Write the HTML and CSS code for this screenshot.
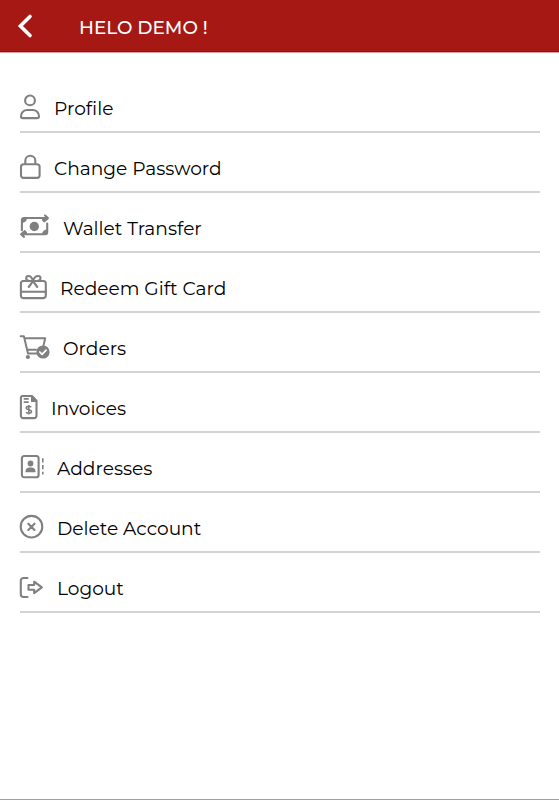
FILE: index.html
```
<!DOCTYPE html>
<html lang="en">
<head>
<meta charset="utf-8">
<title>Account</title>
<link rel="stylesheet" href="styles.css">
</head>
<body>
<header class="bar">
  <svg class="back" width="20" height="28" viewBox="0 0 20 28"><path d="M14 4.500 4.400 14 14 23.500"/></svg>
  <h1 class="title">HELO DEMO !</h1>
</header>
<main class="menu">
  <a class="row profile"><svg class="icon" width="36" height="28" viewBox="0 0 36 28"><circle cx="12" cy="7.4" r="4.9"/><path d="M3 23.2c0-3.6 2.8-6.2 6.2-6.2h5.6c3.4 0 6.2 2.6 6.2 6.2 0 1-.8 1.9-1.9 1.9H4.9C3.8 25.100 3 24.200 3 23.200Z"/></svg><span class="label">Profile</span></a>
  <a class="row password"><svg class="icon" width="36" height="28" viewBox="0 0 36 28"><rect x="3" y="11.200" width="18.600" height="13.700" rx="2.600"/><path d="M7.300 11V7.800a5 5 0 0 1 10 0V11"/></svg><span class="label">Change Password</span></a>
  <a class="row wallet"><svg class="icon" width="45" height="28" viewBox="0 0 45 28"><path d="M3.900 17.200V7a2 2 0 0 1 2-2h23.500M27 2.500l2.900 2.600L27 7.700M29.200 10.500v8.800a2 2 0 0 1-2 2H3.300M6 18.700l-2.900 2.600L6 23.900"/><circle class="fill" cx="16.300" cy="13.500" r="4.700"/><path class="fill" d="M4 5h5A5 5 0 0 1 4 10ZM29 21.500h-5a5 5 0 0 1 5-5ZM24 5H27v4.500a4 4 0 0 1-3-4.500ZM9 21.500H6V17a4 4 0 0 1 3 4.500Z"/></svg><span class="label">Wallet Transfer</span></a>
  <a class="row gift"><svg class="icon" width="42" height="28" viewBox="0 0 42 28"><rect x="2.900" y="8" width="24.900" height="17.100" rx="2.500"/><path d="M3 18.700h25M15 8C12.500 8 8.200 8.300 8.200 5.200 8.200 3.800 9.200 3 10.500 3 13 3 14.300 5.500 15 8Zm0 0c2.500 0 7.500.3 7.500-2.800C22.500 3.800 21.500 3 20.200 3 17.700 3 15.700 5.500 15 8Zm0 .2L10.700 14M15 8.200l4.300 5.800"/></svg><span class="label">Redeem Gift Card</span></a>
  <a class="row orders"><svg class="icon" width="45" height="28" viewBox="0 0 45 28"><path class="thin" d="M2.700 3.300h3.200L10 20.600h9M6.400 5.200h20.800L25.400 13M9 16.700h9"/><circle class="fill" cx="9.900" cy="24" r="2.100"/><circle class="fill" cx="25" cy="19" r="6.600"/><path class="check" d="m21.800 19 2.300 2.300 4-4.200"/></svg><span class="label">Orders</span></a>
  <a class="row invoices"><svg class="icon" width="33" height="28" viewBox="0 0 33 28"><path d="M4.500 3H14l4.500 4.800v15a2.300 2.300 0 0 1-2.300 2.300H5.200a2.300 2.300 0 0 1-2.300-2.300V4.700C2.900 3.700 3.600 3 4.500 3Z"/><path class="fill" d="M13 3v6h6V7.500L14.500 3Z"/><path class="fine" d="M5.700 5.900h5M5.700 9.100h5M13.200 14.200c-1-1.200-5-1.400-5 .9 0 2.400 5.300 1 5.300 3.400 0 2.200-4.200 2.100-5.500.7M10.800 11.900v9.700"/></svg><span class="label">Invoices</span></a>
  <a class="row addresses"><svg class="icon" width="39" height="28" viewBox="0 0 39 28"><rect x="3.900" y="3" width="16.700" height="21.300" rx="2.300"/><circle class="fill" cx="12.500" cy="10.500" r="2.900"/><path class="fill" d="M7.500 19.200v-1c0-2.300 1.800-3.600 4.100-3.600h1.800c2.300 0 4.100 1.300 4.100 3.600v1Z"/><path class="fine" d="M24.800 5.300v4.200M24.800 12v4.200M24.800 18.700v2.800"/></svg><span class="label">Addresses</span></a>
  <a class="row delete"><svg class="icon" width="39" height="28" viewBox="0 0 39 28"><circle cx="13.500" cy="13.700" r="10.800"/><path d="m10.300 10.700 6.200 6.200M16.500 10.700l-6.200 6.200"/></svg><span class="label">Delete Account</span></a>
  <a class="row logout"><svg class="icon" width="39" height="28" viewBox="0 0 39 28"><path d="M9.500 5H5.500a2.700 2.700 0 0 0-2.700 2.700v13.600A2.700 2.700 0 0 0 5.500 24h4M10.500 12h5.700V8.700l7.600 5.700-7.600 5.700v-3.300h-5.700Z"/></svg><span class="label">Logout</span></a>
</main>
</body>
</html>
```
FILE: styles.css
```
* { box-sizing: border-box; }
body {
  margin: 0;
  height: 800px;
  display: flex;
  flex-direction: column;
  background: #fff;
  border-bottom: 1px solid #c98e90;
  font-family: Montserrat, Inter, sans-serif;
  color: #000;
}
.bar {
  flex: none;
  height: 53px;
  display: flex;
  align-items: center;
  padding-left: 16px;
  background: #a61814;
  border-bottom: 1px solid #d9a09f;
  box-shadow: inset 0 -1px #980f0b;
}
.back { fill: none; stroke: #fff; stroke-width: 3.6; stroke-linecap: round; stroke-linejoin: miter; }
.title {
  margin: 3px 0 0 43px;
  font-size: 18.400px;
  line-height: 24px;
  font-weight: 500;
  color: #fff;
  white-space: pre;
}
.menu { display: flex; flex-direction: column; padding: 20px 19px 0 20px; }
.row {
  height: 60px;
  display: flex;
  align-items: flex-start;
  padding-top: 20px;
  border-bottom: 2px solid #d3d3d3;
}
.icon {
  flex: none;
  margin-left: -2px;
  fill: none;
  stroke: #808080;
  stroke-width: 2.100;
  stroke-linecap: round;
  stroke-linejoin: round;
}
.icon .fill { fill: #808080; stroke: none; }
.icon .thin { stroke-width: 2; }
.icon .fine { stroke-width: 1.600; stroke-linecap: butt; }
.icon .check { stroke: #fff; stroke-width: 1.700; }
.label { font-size: 18.600px; line-height: 28px; padding-top: 1.500px; white-space: nowrap; }
```
